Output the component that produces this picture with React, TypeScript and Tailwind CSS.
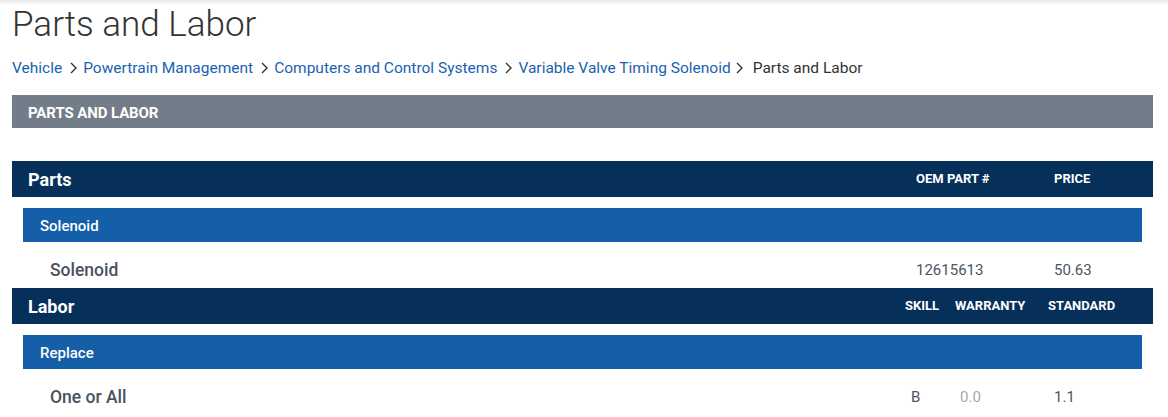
import React from "react";

const crumbs = [
  "Vehicle",
  "Powertrain Management",
  "Computers and Control Systems",
  "Variable Valve Timing Solenoid",
];

function Chevron({ className }: { className?: string }) {
  return (
    <svg
      width="7"
      height="12"
      viewBox="0 0 7 12"
      className={className}
      fill="none"
      stroke="#333"
      strokeWidth="1.4"
    >
      <polyline points="1,1 6,6 1,11" />
    </svg>
  );
}

function SectionHeader({
  title,
  children,
}: {
  title: string;
  children: React.ReactNode;
}) {
  return (
    <div className="flex h-[36px] items-center bg-[#062f5a] pl-4 text-white">
      <div className="flex-1 text-[18px] font-bold">{title}</div>
      {children}
    </div>
  );
}

function SubHeader({ title }: { title: string }) {
  return (
    <div className="mt-[11px] ml-[11px] mr-[11px] flex h-[34px] items-center bg-[#155ea8] pl-[17px] pt-[3px] text-[15px] font-medium text-white">
      {title}
    </div>
  );
}

export default function App() {
  return (
    <div
      className="min-h-[417px] bg-white"
      style={{ fontFamily: "Roboto, 'Liberation Sans', sans-serif" }}
    >
      <div className="h-[5px] bg-gradient-to-b from-[#e6e6e6] to-white" />
      <div className="pl-3 pr-[15px]">
        <h1 className="text-[35px] leading-[40px] font-light text-[#333]">
          Parts and Labor
        </h1>

        {/* Breadcrumb */}
        <nav className="mt-[13px] flex items-center text-[15.5px] leading-5">
          {crumbs.map((c, i) => (
            <React.Fragment key={c}>
              <a className="text-[#1a62b0]" href="#">
                {c}
              </a>
              <Chevron
                className={i === crumbs.length - 1 ? "ml-[5px] mr-[10px]" : "ml-[8px] mr-[6px]"}
              />
            </React.Fragment>
          ))}
          <span className="text-[#333]">Parts and Labor</span>
        </nav>

        <div className="mt-[17px] flex h-[33px] items-center bg-[#737d8a] pl-4 pt-[3px] text-[15px] font-bold tracking-[-0.1px] text-white">
          PARTS AND LABOR
        </div>

        {/* Parts */}
        <div className="mt-[33px]">
          <SectionHeader title="Parts">
            <div className="flex text-[13px] font-bold">
              <div className="w-[138px]">OEM PART #</div>
              <div className="w-[99px]">PRICE</div>
            </div>
          </SectionHeader>
          <SubHeader title="Solenoid" />
          <div className="flex h-[46px] items-center pl-[38px] pt-[11px]">
            <div className="flex-1 text-[17.5px] font-medium text-[#4a5261]">Solenoid</div>
            <div className="flex text-[15px] text-[#4d5563]">
              <div className="w-[138px]">12615613</div>
              <div className="w-[99px]">50.63</div>
            </div>
          </div>
        </div>

        {/* Labor */}
        <SectionHeader title="Labor">
          <div className="flex text-[13px] font-bold">
            <div className="w-[50px]">SKILL</div>
            <div className="w-[93px]">WARRANTY</div>
            <div className="w-[105px]">STANDARD</div>
          </div>
        </SectionHeader>
        <SubHeader title="Replace" />
        <div className="flex h-[46px] items-center pl-[38px] pt-[11px]">
          <div className="flex-1 text-[17.5px] font-medium text-[#4a5261]">One or All</div>
          <div className="flex text-[15px]">
            <div className="w-[50px] pl-[6px] text-[#4d5563]">B</div>
            <div className="w-[93px] pl-[5px] text-[#a3a8b0]">0.0</div>
            <div className="w-[105px] pl-[6px] text-[#4d5563]">1.1</div>
          </div>
        </div>
      </div>
    </div>
  );
}
